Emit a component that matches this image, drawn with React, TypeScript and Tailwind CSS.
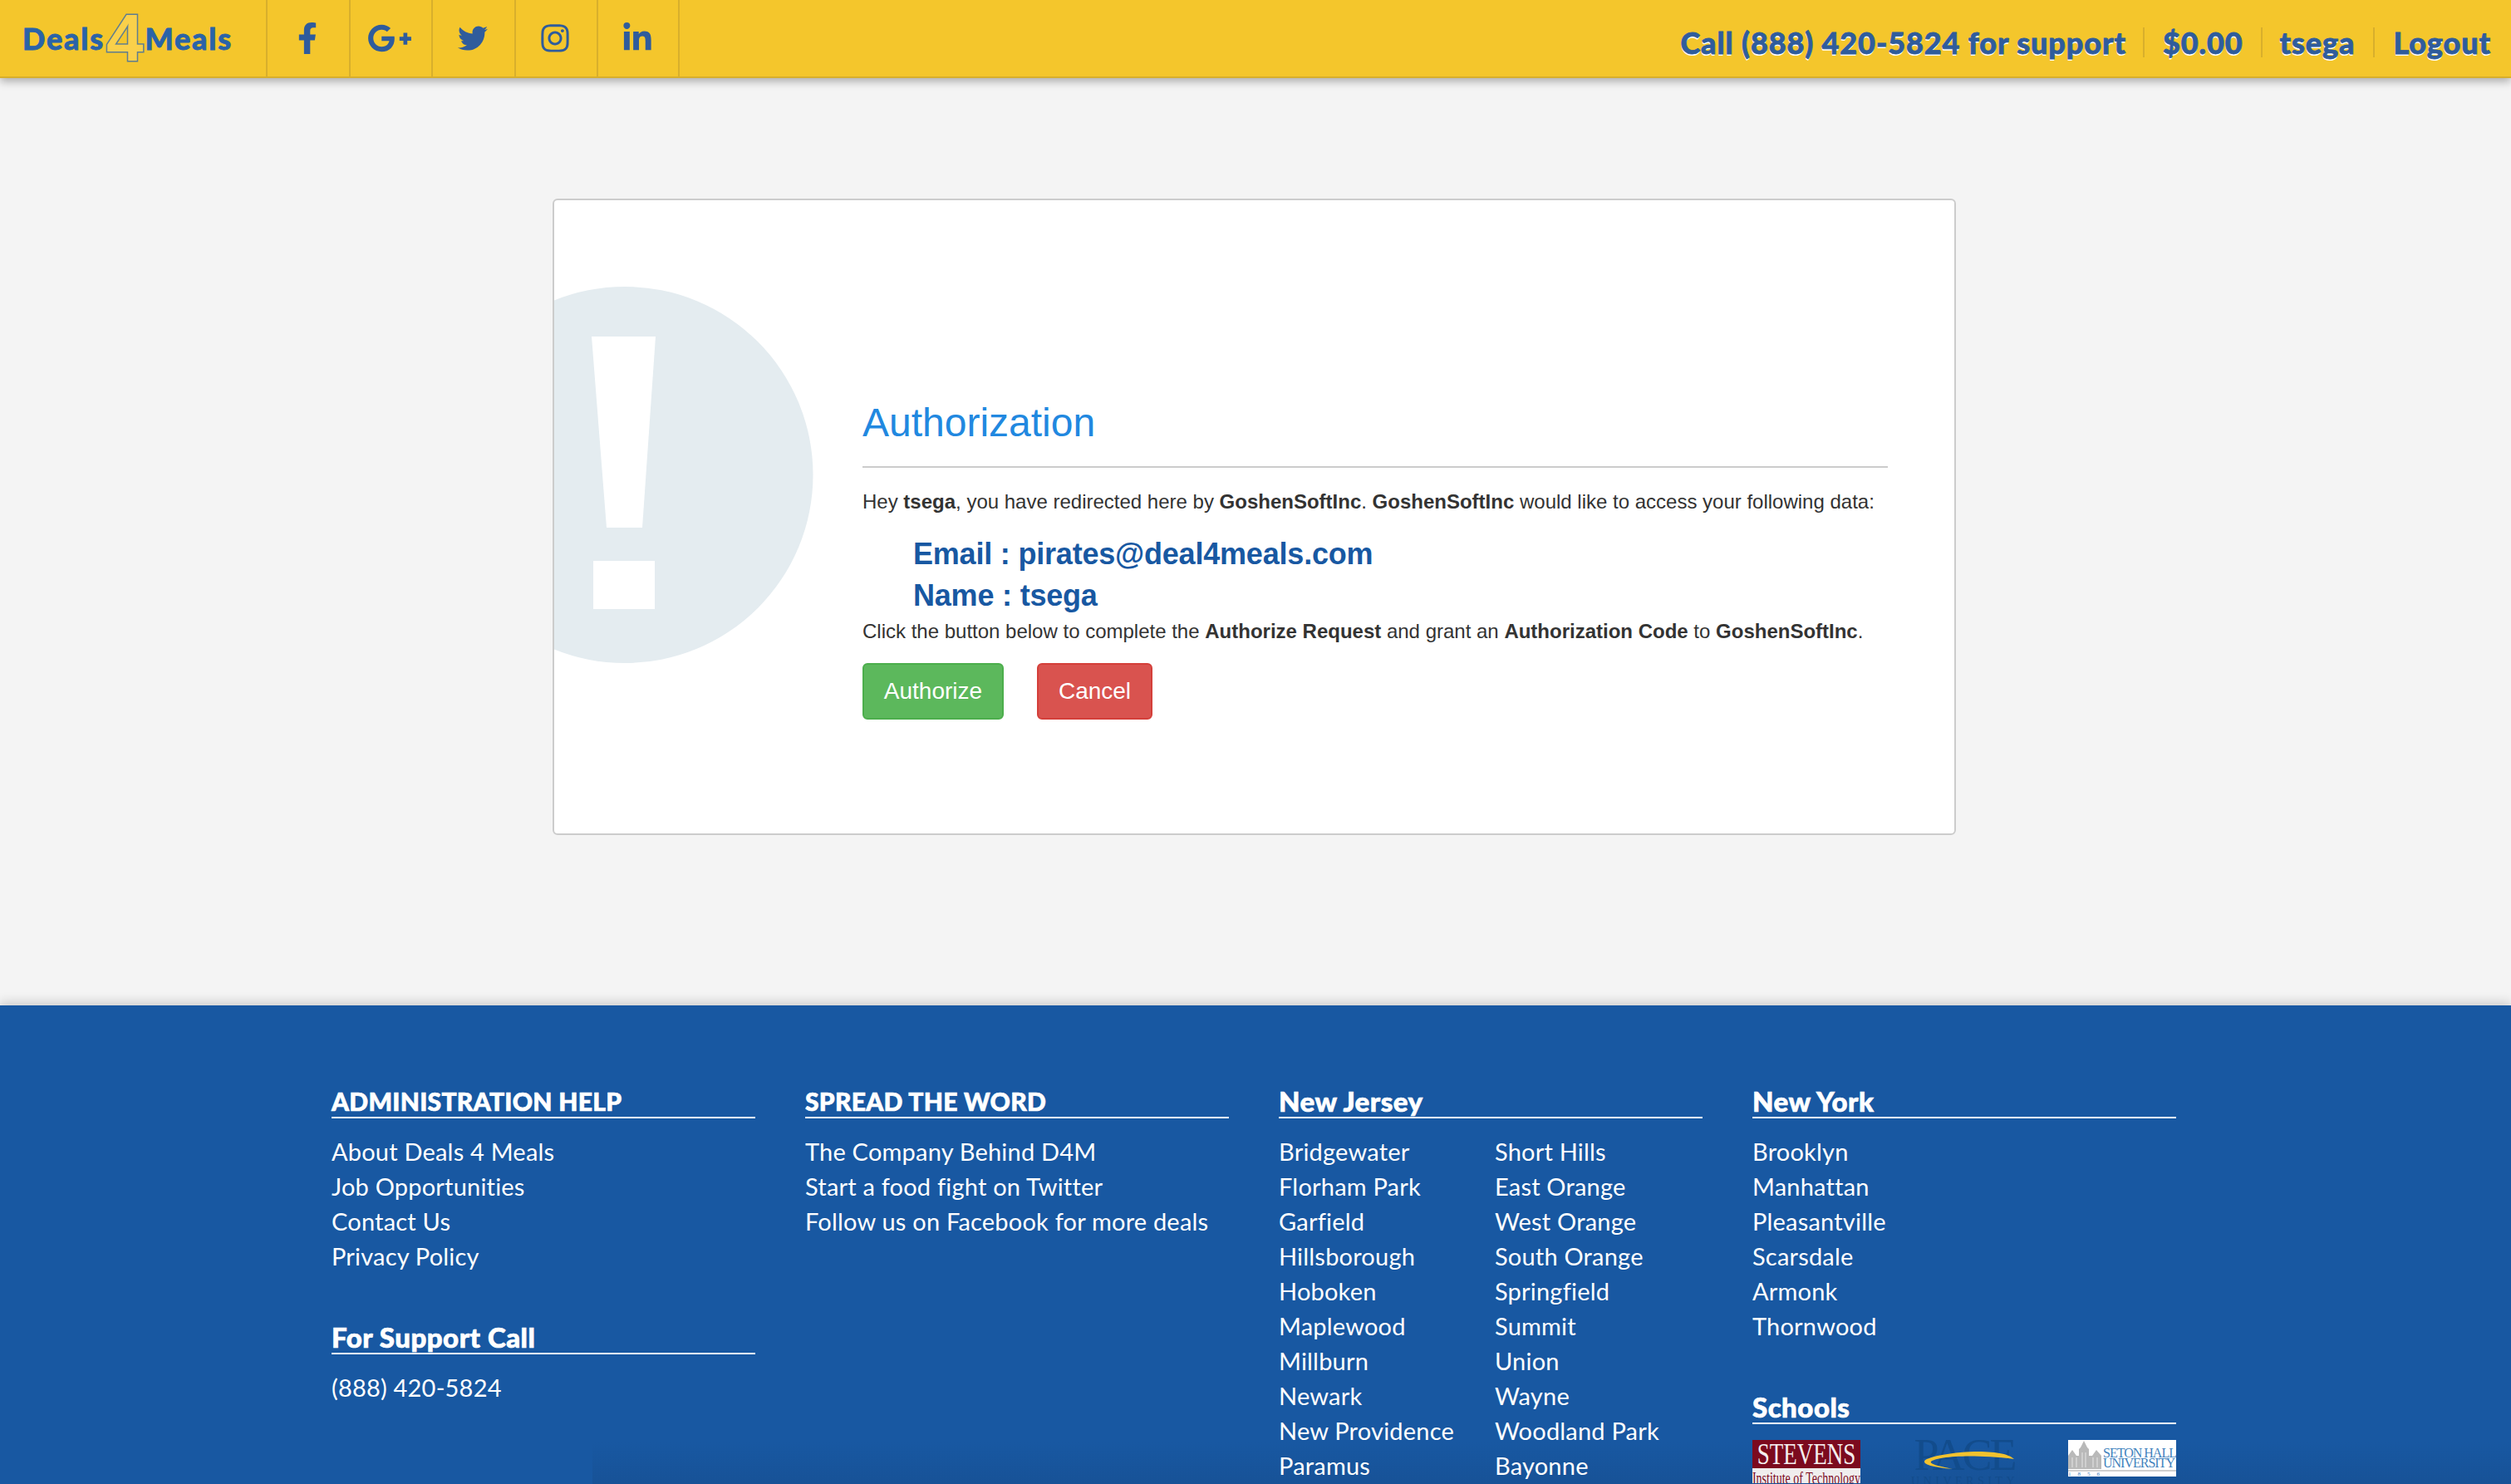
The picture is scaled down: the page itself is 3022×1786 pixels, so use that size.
import React from 'react';
import { FaFacebookF, FaGooglePlusG, FaTwitter, FaInstagram, FaLinkedinIn } from 'react-icons/fa';

const socials = [
  { Icon: FaFacebookF, size: 38 },
  { Icon: FaGooglePlusG, size: 54 },
  { Icon: FaTwitter, size: 36 },
  { Icon: FaInstagram, size: 38 },
  { Icon: FaLinkedinIn, size: 38 },
];

const adminLinks = ['About Deals 4 Meals', 'Job Opportunities', 'Contact Us', 'Privacy Policy'];
const spreadLinks = ['The Company Behind D4M', 'Start a food fight on Twitter', 'Follow us on Facebook for more deals'];
const njLeft = ['Bridgewater', 'Florham Park', 'Garfield', 'Hillsborough', 'Hoboken', 'Maplewood', 'Millburn', 'Newark', 'New Providence', 'Paramus'];
const njRight = ['Short Hills', 'East Orange', 'West Orange', 'South Orange', 'Springfield', 'Summit', 'Union', 'Wayne', 'Woodland Park', 'Bayonne'];
const nyLinks = ['Brooklyn', 'Manhattan', 'Pleasantville', 'Scarsdale', 'Armonk', 'Thornwood'];

const Heading: React.FC<{ children: React.ReactNode; caps?: boolean }> = ({ children, caps }) => (
  <h3 className={caps
    ? 'h-[39px] border-b-2 border-white text-[30px] leading-[36px] font-black whitespace-nowrap tracking-[0.3px] [-webkit-text-stroke:0.7px_#fff]'
    : 'h-[39px] border-b-2 border-white text-[33px] leading-[36px] font-black whitespace-nowrap tracking-[0.5px] [-webkit-text-stroke:0.7px_#fff]'}>
    {children}
  </h3>
);

const LinkList: React.FC<{ items: string[] }> = ({ items }) => (
  <ul className="flex flex-col">
    {items.map((item) => (
      <li key={item} className="h-[42px] text-[29px] leading-[42px] whitespace-nowrap tracking-[0.2px]">{item}</li>
    ))}
  </ul>
);

const AlertIcon: React.FC = () => (
  <svg className="shrink-0 mt-[104px]" width="312" height="453" viewBox="0 0 312 453">
    <circle cx="85" cy="226.5" r="226.5" fill="#e4ecf0" />
    <path d="M45 60 H122 L106 290 H63 Z" fill="#fff" />
    <rect x="47" y="330" width="74" height="58" fill="#fff" />
  </svg>
);

const App: React.FC = () => {
  return (
    <div className="h-[1786px] overflow-hidden bg-[#f4f4f4] font-['Liberation_Sans',sans-serif] text-[#333]">
      {/* Top bar */}
      <header className="relative z-10 flex h-[94px] items-stretch justify-between border-b-2 border-[#d8af2c] bg-[#f4c62c] shadow-[0_4px_10px_rgba(0,0,0,0.3)]">
        <div className="flex">
          <div className="flex w-[320px] items-center pl-[27px] font-['Lato',sans-serif] text-[36px] font-black tracking-[1.8px] text-[#2a63a8] [-webkit-text-stroke:0.8px_#2a63a8]">
            <span>Deals</span>
            <span className="mx-[2px] font-['Liberation_Sans',sans-serif] text-[80px] leading-none font-bold tracking-normal text-[#fad04a] [-webkit-text-stroke:3px_#5f7d8f] [paint-order:stroke_fill]">4</span>
            <span>Meals</span>
          </div>
          {socials.map(({ Icon, size }, i) => (
            <div key={i} className="flex w-[99.5px] items-center justify-center border-l-2 border-[#d8af2c] pr-[2px] text-[#2f5c9c] last:border-r-2">
              <Icon size={size} />
            </div>
          ))}
        </div>
        <nav className="flex items-center pr-[24px] pt-[10px] font-['Lato',sans-serif] text-[36px] font-black tracking-[0.9px] text-[#2f5c9c] [text-shadow:0_2px_0_#fff] [-webkit-text-stroke:0.8px_#2f5c9c]">
          <span className="border-r-2 border-[#d8af2c] pr-[20px] leading-[36px]">Call (888) 420-5824 for support</span>
          <span className="border-r-2 border-[#d8af2c] px-[22px] leading-[36px]">$0.00</span>
          <span className="border-r-2 border-[#d8af2c] pl-[20px] pr-[22px] leading-[36px]">tsega</span>
          <span className="pl-[22px] leading-[36px]">Logout</span>
        </nav>
      </header>

      {/* Authorization card */}
      <main className="h-[1116px] pt-[145px]">
        <div className="ml-[665px] mr-[668px] flex h-[766px] overflow-hidden rounded-[6px] border-2 border-[#ccc] bg-white">
          <AlertIcon />
          <div className="ml-[59px] mr-[80px] min-w-0 flex-1 pt-[241px]">
            <h2 className="h-[81px] border-b-2 border-[#ccc] text-[48px] leading-[54px] text-[#2188e0]">Authorization</h2>
            <p className="mt-[23px] text-[24px] leading-[36px] whitespace-nowrap">
              Hey <b>tsega</b>, you have redirected here by <b>GoshenSoftInc</b>. <b>GoshenSoftInc</b> would like to access your following data:
            </p>
            <div className="mt-[20px] pl-[61px] text-[36px] leading-[50px] font-bold tracking-[-0.2px] text-[#1858a2]">
              <div>Email : pirates@deal4meals.com</div>
              <div>Name : tsega</div>
            </div>
            <p className="text-[24px] leading-[36px] whitespace-nowrap">
              Click the button below to complete the <b>Authorize Request</b> and grant an <b>Authorization Code</b> to <b>GoshenSoftInc</b>.
            </p>
            <div className="mt-[20px] flex gap-[40px]">
              <button className="h-[68px] w-[170px] rounded-[6px] border-2 border-[#4cae4c] bg-[#5cb85c] text-[28px] text-white">Authorize</button>
              <button className="h-[68px] w-[139px] rounded-[6px] border-2 border-[#d43f3a] bg-[#d9534f] text-[28px] text-white">Cancel</button>
            </div>
          </div>
        </div>
      </main>

      {/* Footer */}
      <footer className="relative h-[576px] bg-[#1858a2] pl-[399px] pr-[403px] pt-[97px] font-['Lato',sans-serif] text-white shadow-[0_-4px_12px_rgba(0,0,0,0.16)]">
        <div className="absolute bottom-0 left-[713px] right-0 h-[50px] bg-gradient-to-b from-transparent to-[#175297]" />
        <div className="relative grid grid-cols-4 gap-x-[60px]">
          <div>
            <Heading caps>ADMINISTRATION HELP</Heading>
            <div className="mt-[19px]"><LinkList items={adminLinks} /></div>
            <div className="mt-[58px]">
              <Heading>For Support Call</Heading>
              <div className="mt-[19px]"><LinkList items={['(888) 420-5824']} /></div>
            </div>
          </div>
          <div>
            <Heading caps>SPREAD THE WORD</Heading>
            <div className="mt-[19px]"><LinkList items={spreadLinks} /></div>
          </div>
          <div>
            <Heading>New Jersey</Heading>
            <div className="mt-[19px] grid grid-cols-[260px_1fr]">
              <LinkList items={njLeft} />
              <LinkList items={njRight} />
            </div>
          </div>
          <div>
            <Heading>New York</Heading>
            <div className="mt-[19px]"><LinkList items={nyLinks} /></div>
            <div className="mt-[58px]">
              <Heading>Schools</Heading>
              <div className="mt-[19px] flex justify-between font-['Liberation_Serif',serif]">
                <div className="h-[52px] w-[130px] overflow-hidden bg-[#f0eeee]">
                  <div className="flex h-[34px] items-center justify-center bg-[#7c0a1e] text-[36px] leading-[34px] text-[#f4eeee]">
                    <span className="scale-x-[0.75]">STEVENS</span>
                  </div>
                  <div className="flex justify-center text-[20px] leading-[24px] whitespace-nowrap text-[#7c0a1e]">
                    <span className="scale-x-[0.7]">Institute of Technology</span>
                  </div>
                </div>
                <div className="relative h-[52px] w-[128px] text-center text-[#124c8c]">
                  <div className="text-[54px] leading-[36px] tracking-[-3px]">PACE</div>
                  <svg className="absolute top-[13px] left-[16px]" width="108" height="22" viewBox="0 0 108 22">
                    <path d="M108 10 C100 3 85 1 60 1 C30 2 0 8 0 13 C0 17 12 20 34 22 C16 18 6 16 8 13 C14 8 50 3 108 10 Z" fill="#f2c22e" />
                  </svg>
                  <div className="mt-[8px] text-[14px] leading-[12px] tracking-[4.5px]">UNIVERSITY</div>
                </div>
                <div className="flex h-[44px] w-[130px] flex-col bg-white">
                  <div className="flex h-[35px] items-end">
                    <svg className="shrink-0" width="40" height="34" viewBox="0 0 40 34">
                      <path d="M0 34 V18 L5 11 L10 18 H13 V10 L15 8 L19 0 L23 8 L25 10 V18 H29 L34 11 L40 18 V34 Z" fill="#b9b9b9" />
                      <path d="M5 20 V32 M10 20 V32 M17 14 V32 M21 14 V32 M30 20 V32 M35 20 V32" stroke="#e6e6e6" strokeWidth="1" />
                    </svg>
                    <div className="ml-[2px] pb-[1px] text-[16px] leading-[12px] tracking-[-1px] whitespace-nowrap text-[#3f82bd]">SETON HALL<br />UNIVERSITY</div>
                  </div>
                  <div className="mt-[1px] h-[2px] bg-[#cfcfcf]" />
                  <div className="text-[7px] leading-[6px] tracking-[8px] text-[#3f82bd]">1856</div>
                </div>
              </div>
            </div>
          </div>
        </div>
      </footer>
    </div>
  );
};

export default App;
